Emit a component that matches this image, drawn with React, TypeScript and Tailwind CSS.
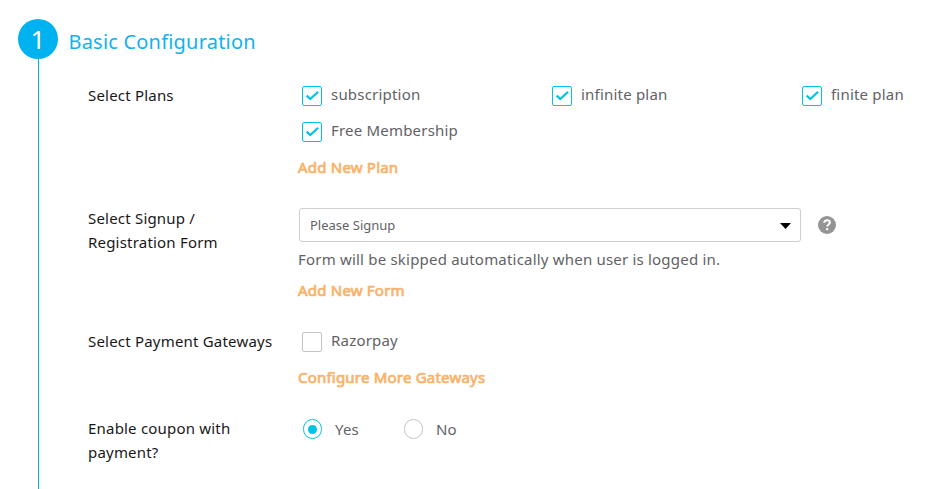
import type { ReactNode } from "react";

function Checkbox({ label, checked = false }: { label: string; checked?: boolean }) {
  return (
    <label className="flex h-5 items-center">
      <span
        className={`flex h-5 w-5 shrink-0 items-center justify-center rounded-[2px] border ${
          checked ? "border-[#00c3e6]" : "border-[#c3c3c3]"
        }`}
      >
        {checked && (
          <svg width="18" height="18" viewBox="0 0 18 18" fill="none" stroke="#00c3e6" strokeWidth="2.2">
            <path d="M3.7 8.6 L7.3 12 L15.1 4.8" />
          </svg>
        )}
      </span>
      <span className="-mt-[5px] ml-[9px] whitespace-nowrap leading-5 text-[#626265]">{label}</span>
    </label>
  );
}

function Radio({ label, checked = false }: { label: string; checked?: boolean }) {
  return (
    <label className="flex h-5 items-center">
      <span
        className={`flex h-5 w-[19px] items-center justify-center rounded-full border ${
          checked ? "border-[#00c3e6]" : "border-[#c3c3c3]"
        }`}
      >
        {checked && <span className="h-[9px] w-[9px] rounded-full bg-[#00c3e6]" />}
      </span>
      <span className="ml-[13px] leading-5 text-[#626265]">{label}</span>
    </label>
  );
}

function ActionLink({ children }: { children: ReactNode }) {
  return (
    <a className="block w-max leading-6 tracking-[0.21px] text-[#f9b269] [-webkit-text-stroke:0.7px_#f9b269]">
      {children}
    </a>
  );
}

function Row({ label, height, children }: { label: ReactNode; height: string; children: ReactNode }) {
  return (
    <div className={`flex ${height}`}>
      <div className="-mt-px w-[210px] shrink-0 whitespace-nowrap leading-6 text-[#191818]">{label}</div>
      <div className="flex-1">{children}</div>
    </div>
  );
}

export default function App() {
  return (
    <main className="flex h-[489px] w-[925px] overflow-hidden bg-white pl-[18px] pt-[19px] font-['Noto_Sans',sans-serif] text-[15px] tracking-[0.2px]">
      <div className="flex w-10 shrink-0 flex-col items-center">
        <div className="flex h-10 w-10 shrink-0 items-center justify-center rounded-full bg-[#00b2f0] pt-px text-[26px] tracking-normal text-white">
          1
        </div>
        <div className="ml-px w-px flex-1 bg-[#00b2f0]" />
      </div>
      <div className="flex-1">
        <h1 className="ml-[10.5px] mt-2 h-[57px] text-[20px] leading-[30px] tracking-[0.2px] text-[#12b1ef]">
          Basic Configuration
        </h1>
        <div className="ml-[30px]">
          <Row label="Select Plans" height="h-[123px]">
            <div className="ml-1 mt-[2px] grid grid-cols-[250px_250px_120px] gap-y-4">
              <Checkbox label="subscription" checked />
              <Checkbox label="infinite plan" checked />
              <Checkbox label="finite plan" checked />
              <Checkbox label="Free Membership" checked />
            </div>
            <div className="mt-[13px]">
              <ActionLink>Add New Plan</ActionLink>
            </div>
          </Row>
          <Row
            label={
              <>
                Select Signup /<br />
                Registration Form
              </>
            }
            height="h-[123px]"
          >
            <div className="ml-px mt-px flex items-center">
              <div className="flex h-[34px] w-[502px] items-center justify-between rounded-[3px] border border-[#cecece] pl-[10px] pr-[9px] text-[13px] tracking-normal text-[#626265]">
                <span className="pt-px">Please Signup</span>
                <svg className="mt-[2px]" width="11" height="6" viewBox="0 0 11 6">
                  <path d="M0 0h11L5.5 6z" fill="#000" />
                </svg>
              </div>
              <svg className="ml-[17px]" width="18" height="18" viewBox="0 0 18 18">
                <circle cx="9" cy="9" r="9" fill="#949494" />
                <path
                  d="M6.2 6.8C6.3 5.1 7.5 4.2 9.1 4.2c1.6 0 2.8.9 2.8 2.3 0 2-2.7 2-2.7 4.1"
                  fill="none"
                  stroke="#fff"
                  strokeWidth="2"
                />
                <path d="M8.1 12.1h2.1v2.1H8.1z" fill="#fff" />
              </svg>
            </div>
            <p className="mt-[5px] leading-6 text-[#626265]">
              Form will be skipped automatically when user is logged in.
            </p>
            <div className="mt-[7px]">
              <ActionLink>Add New Form</ActionLink>
            </div>
          </Row>
          <Row label="Select Payment Gateways" height="h-[87px]">
            <div className="ml-1 mt-[2px]">
              <Checkbox label="Razorpay" />
            </div>
            <div className="mt-[13px]">
              <ActionLink>Configure More Gateways</ActionLink>
            </div>
          </Row>
          <Row
            label={
              <>
                Enable coupon with
                <br />
                payment?
              </>
            }
            height="h-[72px]"
          >
            <div className="ml-[5px] mt-[2px] flex">
              <div className="w-[101px]">
                <Radio label="Yes" checked />
              </div>
              <Radio label="No" />
            </div>
          </Row>
        </div>
      </div>
    </main>
  );
}
